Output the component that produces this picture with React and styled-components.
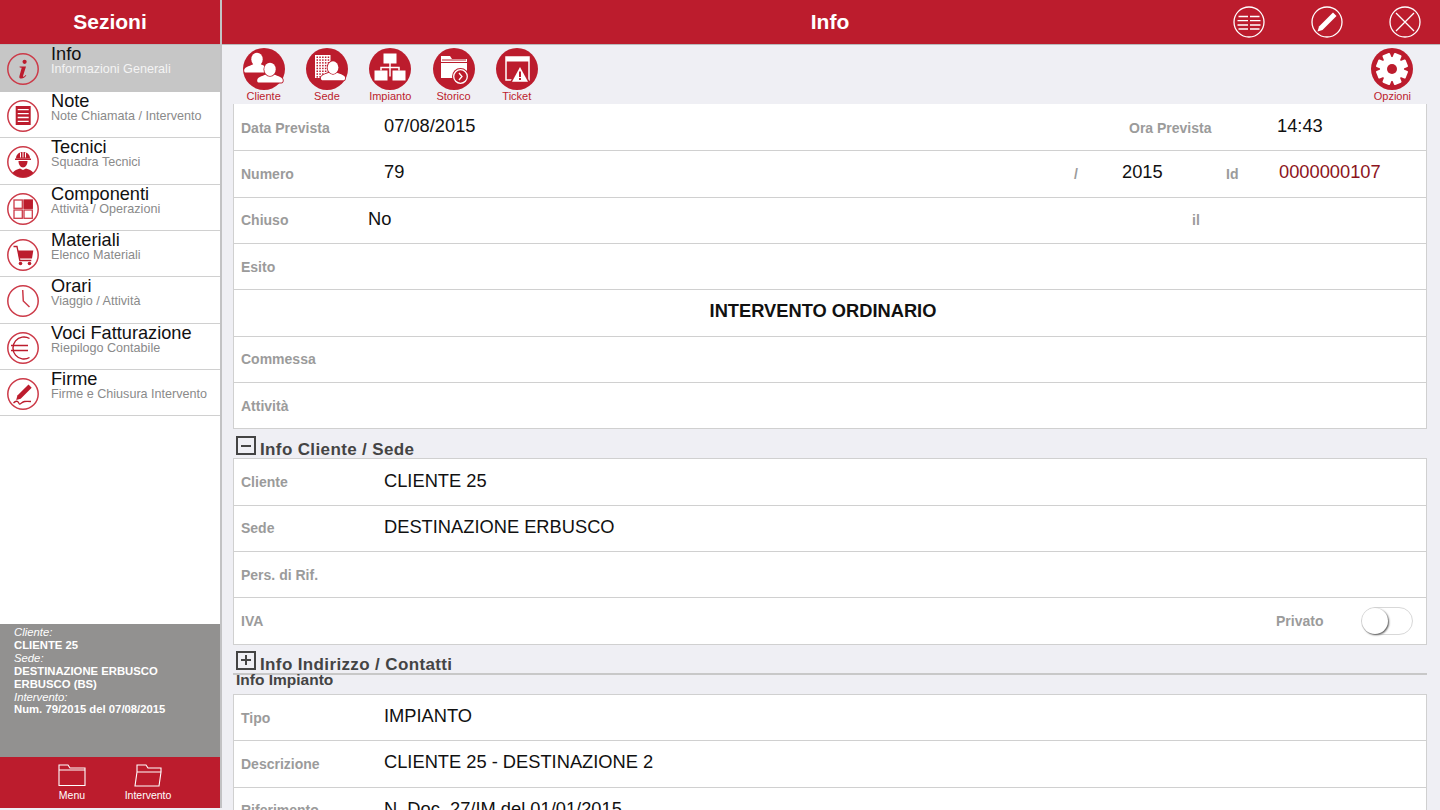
import React from 'react';
import styled, { createGlobalStyle } from 'styled-components';

const RED = '#bc1c2d';

const Global = createGlobalStyle`
  html, body { margin: 0; padding: 0; height: 810px; overflow: hidden; background: #efeff4; }
  body { font-family: "Liberation Sans", Arial, sans-serif; }
`;

const Page = styled.div`
  display: grid;
  grid-template-columns: 222px 1fr;
  width: 1440px;
  height: 810px;
  overflow: hidden;
`;

const Side = styled.aside`
  display: flex;
  flex-direction: column;
  height: 808px;
  box-sizing: border-box;
  background: #fff;
  border-right: 2px solid #c2c2c4;
`;

const TopBar = styled.header`
  flex: none;
  display: flex;
  align-items: center;
  justify-content: center;
  position: relative;
  height: 44px;
  padding-right: ${p => p.$inset || 0}px;
  background: ${RED};
  border-bottom: 1px solid #b9b9bb;
  color: #fff;
  font-size: 21px;
  font-weight: bold;
`;

const Menu = styled.nav`
  flex: 1;
  display: flex;
  flex-direction: column;
`;

const MenuItem = styled.div`
  display: flex;
  height: ${p => (p.$active ? '47px' : '46.33px')};
  flex: none;
  box-sizing: border-box;
  padding: 1px 0 0 7px;
  gap: 12px;
  align-items: flex-start;
  background: ${p => (p.$active ? '#c6c6c6' : '#fff')};
  border-bottom: 1px solid ${p => (p.$active ? '#c6c6c6' : '#d0d0d0')};
`;

const MenuIcon = styled.svg`
  flex: none;
  width: 32px;
  height: 32px;
  margin-top: 7px;
`;

const MenuText = styled.div`
  display: flex;
  flex-direction: column;
`;

const MenuTitle = styled.span`
  font-size: 18.2px;
  line-height: 16px;
  color: #111;
`;

const MenuSub = styled.span`
  font-size: 12.6px;
  line-height: 14px;
  color: ${p => (p.$active ? '#f4f4f4' : '#8a8a8a')};
`;

const Summary = styled.div`
  flex: none;
  height: 133px;
  box-sizing: border-box;
  padding: 2px 0 0 14px;
  background: #929190;
  color: #fff;
  font-size: 11.3px;
  line-height: 12.9px;
`;

const SummaryLabel = styled.div`
  font-style: italic;
`;

const SummaryValue = styled.div`
  font-weight: bold;
`;

const Foot = styled.div`
  flex: none;
  height: 51px;
  display: flex;
  background: ${RED};
  padding-left: 42px;
  gap: 16px;
`;

const FootBtn = styled.div`
  width: 60px;
  display: flex;
  flex-direction: column;
  align-items: center;
  padding-top: 6px;
  color: #fff;
  font-size: 10.5px;
  line-height: 12px;
  svg { width: 28px; height: 24px; margin-bottom: 2px; display: block; }
`;

const Main = styled.main`
  display: flex;
  flex-direction: column;
  min-width: 0;
  height: 810px;
  overflow: hidden;
  background: #efeff4;
`;

const HeadActions = styled.div`
  position: absolute;
  right: 19px;
  top: 6px;
  display: flex;
  gap: 46px;
  svg { width: 32px; height: 32px; display: block; }
`;

const Tools = styled.div`
  flex: none;
  display: flex;
  height: 59px;
  padding: 3px 16px 0 10px;
  box-sizing: border-box;
`;

const Tool = styled.div`
  width: 63.3px;
  display: flex;
  flex-direction: column;
  align-items: center;
  color: ${RED};
  font-size: 11px;
  line-height: 12px;
  ${p => p.$right && 'margin-left: auto;'}
  svg { width: 42px; height: 42px; display: block; }
`;

const Body = styled.div`
  padding: 0 13px 0 11px;
`;

const Card = styled.section`
  background: #fff;
  border: 1px solid #d0d0d0;
  ${p => p.$flush && 'border-top: 0; padding-top: 1px;'}
`;

const Row = styled.div`
  display: flex;
  align-items: center;
  height: 46.33px;
  box-sizing: border-box;
  padding-left: 7px;
  border-bottom: 1px solid #d0d0d0;
  &:last-child { border-bottom: 0; height: 45.5px; }
`;

const Label = styled.span`
  flex: none;
  width: ${p => p.$w || 143}px;
  ${p => p.$auto && 'margin-left: auto;'}
  font-size: 14px;
  font-weight: bold;
  color: #9b9b9b;
`;

const Value = styled.span`
  ${p => (p.$w ? `flex: none; width: ${p.$w}px;` : 'flex: 1;')}
  padding-bottom: 3px;
  font-size: 18.3px;
  color: ${p => p.$tone || '#111'};
  white-space: nowrap;
`;

const Banner = styled.div`
  flex: 1;
  text-align: center;
  padding: 0 21px 3px 0;
  font-size: 18.3px;
  font-weight: bold;
  color: #111;
`;

const SectionHead = styled.div`
  display: flex;
  align-items: flex-end;
  height: ${p => p.$h}px;
  padding-left: 3px;
  color: #444;
  font-size: 17px;
  font-weight: bold;
  letter-spacing: 0.37px;
  line-height: 17px;
  gap: 4px;
`;

const Toggler = styled.span`
  flex: none;
  width: 20px;
  height: 19px;
  box-sizing: border-box;
  margin-bottom: 3px;
  border: 2px solid #444;
  display: flex;
  align-items: center;
  justify-content: center;
  position: relative;
  &::before { content: ''; width: 10px; height: 2px; background: #444; }
  ${p => p.$plus && `&::after { content: ''; position: absolute; width: 2px; height: 10px; background: #444; }`}
`;

const Rule = styled.div`
  height: 2px;
  background: #c8c8c8;
`;

const SubHead = styled.div`
  height: 22px;
  margin-top: -3px;
  padding-left: 3px;
  color: #444;
  font-size: 15.5px;
  font-weight: bold;
  line-height: 16px;
`;

const Switch = styled.span`
  flex: none;
  position: relative;
  width: 52px;
  height: 28px;
  box-sizing: border-box;
  margin-right: 13px;
  border: 1px solid #d8d8d8;
  border-radius: 14px;
  background: #fff;
  &::after {
    content: '';
    position: absolute;
    left: 0;
    top: 0;
    width: 26px;
    height: 26px;
    border-radius: 50%;
    background: #fff;
    box-shadow: 1px 1px 2px #555;
  }
`;

const Ring = ({ children }) => (
  <MenuIcon viewBox="0 0 32 32">
    <circle cx="16" cy="16" r="15.2" fill="none" stroke="#cc3a48" strokeWidth="1.5" />
    {children}
  </MenuIcon>
);

const menuIcons = {
  info: (
    <>
      <circle cx="17.6" cy="8.8" r="2.100" fill={RED} />
      <path d="M12.5 13.500h6.500l-3 9.500c-.2.8.5 1 1.200.4l1.600-1.400.5.600c-1.500 1.800-3 3-4.900 3-1.700 0-2.400-.9-2-2.300l2.300-8.500-1.900-.3z" fill={RED} />
    </>
  ),
  note: (
    <>
      <rect x="8.700" y="6" width="15" height="19" fill={RED} />
      <path d="M10.700 9.700h11M10.700 13.700h11M10.700 17.500h11M10.700 21.300h11" stroke="#fff" strokeWidth="1.300" />
    </>
  ),
  tecnici: (
    <>
      <path d="M9 12.500c0-4 3-6.500 7-6.500s7 2.500 7 6.500z" fill={RED} />
      <path d="M13.500 6.500v5M16 6v5.500M18.500 6.500v5" stroke="#fff" strokeWidth="1" />
      <rect x="8" y="12.500" width="16" height="1.500" fill={RED} />
      <path d="M11.500 15h9c0 3.500-1.800 6.500-4.500 6.500s-4.500-3-4.500-6.500z" fill={RED} />
      <path d="M5.500 27c2-3 4.500-3.500 7.500-4.500l3 1.500 3-1.500c3 1 5.500 1.500 7.500 4.500-3 3-6.500 4.200-10.500 4.200S8.500 30 5.500 27z" fill={RED} />
    </>
  ),
  componenti: (
    <>
      <rect x="7" y="7" width="8.300" height="8.300" fill="none" stroke="#cc3a48" strokeWidth="1.300" />
      <rect x="17" y="7" width="8.300" height="8.300" fill={RED} stroke={RED} strokeWidth="1.300" />
      <rect x="7" y="17" width="8.300" height="8.300" fill="none" stroke="#cc3a48" strokeWidth="1.300" />
      <rect x="17" y="17" width="8.300" height="8.300" fill="none" stroke="#cc3a48" strokeWidth="1.300" />
    </>
  ),
  materiali: (
    <>
      <path d="M6.500 7.500h3.500l2.800 14h11.500" fill="none" stroke={RED} strokeWidth="1.300" />
      <path d="M10.800 11.500h15.500l-1.300 8H12.300z" fill={RED} />
      <circle cx="13.500" cy="24.500" r="1.800" fill={RED} />
      <circle cx="22.500" cy="24.500" r="1.800" fill={RED} />
    </>
  ),
  orari: <path d="M15.700 5l.6 11 6.200 6" fill="none" stroke="#cc3a48" strokeWidth="1.500" />,
  voci: (
    <>
      <path d="M22.500 6.500A11 11 0 1 0 22.500 25.500" fill="none" stroke={RED} strokeWidth="1.400" />
      <path d="M4 13.500h17M4 18.500h17" stroke={RED} strokeWidth="1.400" />
    </>
  ),
  firme: (
    <>
      <path d="M21.500 6.500l3.200 3.200-11 11-4.500 1.300 1.200-4.600z" fill={RED} />
      <path d="M6.500 25c2-2 4-2.500 5-.5s1 2 3 .5 3-2 9.500-1.500" fill="none" stroke={RED} strokeWidth="1.300" />
    </>
  ),
};

const menu = [
  ['Info', 'Informazioni Generali', 'info'],
  ['Note', 'Note Chiamata / Intervento', 'note'],
  ['Tecnici', 'Squadra Tecnici', 'tecnici'],
  ['Componenti', 'Attività / Operazioni', 'componenti'],
  ['Materiali', 'Elenco Materiali', 'materiali'],
  ['Orari', 'Viaggio / Attività', 'orari'],
  ['Voci Fatturazione', 'Riepilogo Contabile', 'voci'],
  ['Firme', 'Firme e Chiusura Intervento', 'firme'],
];

const Person = ({ x, y, s = 1, cut }) => (
  <g
    transform={`translate(${x} ${y}) scale(${s})`}
    fill="#fff"
    stroke={cut ? RED : 'none'}
    strokeWidth={cut ? 1.800 : 0}
    paintOrder="stroke"
  >
    <path d="M-3 -2c-.5 2.500-8 3-10 6-1 1.500-.5 4 1 4h24c1.500 0 2-2.500 1-4-2-3-9.500-3.500-10-6z" />
    <ellipse cx="0" cy="-6" rx="6" ry="7" />
  </g>
);

const ToolIcon = ({ children }) => (
  <svg viewBox="0 0 42 42">
    <circle cx="21" cy="21" r="21" fill={RED} />
    {children}
  </svg>
);

const buildingCells = [];
for (let r = 0; r < 8; r++) {
  for (let c = 0; c < 5; c++) {
    buildingCells.push(<rect key={`${r}-${c}`} x={10.500 + c * 2.800} y={8.500 + r * 2.800} width="1.500" height="1.500" fill={RED} />);
  }
}

const toolIcons = [
  ['Cliente', (
    <>
      <Person x={14} y={17} s={0.95} />
      <Person x={27} y={27} s={0.95} cut />
    </>
  )],
  ['Sede', (
    <>
      <rect x="9" y="7" width="15.500" height="23" fill="#fff" />
      {buildingCells}
      <Person x={27} y={25} s={0.9} cut />
    </>
  )],
  ['Impianto', (
    <>
      <rect x="14.500" y="5.500" width="13" height="10" fill="#fff" />
      <rect x="5.500" y="22.500" width="13" height="10" fill="#fff" />
      <rect x="23.500" y="22.500" width="13" height="10" fill="#fff" />
      <path d="M21 15v5M12 22.500V19.500h18v3M21 19.500v9" fill="none" stroke="#fff" strokeWidth="1.500" />
    </>
  )],
  ['Storico', (
    <>
      <path d="M8 8h9l2 3h15v3H8z" fill="#fff" />
      <path d="M9 12h24" stroke={RED} strokeWidth="1" />
      <path d="M8 15h26v15H8z" fill="#fff" />
      <circle cx="27.500" cy="28.500" r="8.500" fill={RED} />
      <circle cx="27.500" cy="28.500" r="6.800" fill="none" stroke="#fff" strokeWidth="1.300" />
      <path d="M26 25l3 3.500-3 3.500" fill="none" stroke="#fff" strokeWidth="1.300" />
    </>
  )],
  ['Ticket', (
    <>
      <path d="M10 9h23v23H10z" fill="none" stroke="#fff" strokeWidth="1.500" />
      <rect x="10" y="9" width="23" height="4.500" fill="#fff" />
      <path d="M24 16.500L34.500 35H13.500z" fill={RED} />
      <path d="M24 19L32 33.700H16z" fill="#fff" />
      <path d="M24 23.500v5.500M24 30v2" stroke={RED} strokeWidth="2" />
    </>
  )],
];

const gear = (
  <g>
    <circle cx="21" cy="21" r="12" fill="#fff" />
    {[0, 45, 90, 135].map(a => (
      <rect key={a} x="17" y="5" width="8" height="32" rx="1" fill="#fff" transform={`rotate(${a + 22.500} 21 21)`} />
    ))}
    <circle cx="21" cy="21" r="5" fill={RED} />
  </g>
);

export default function App() {
  return (
    <Page>
      <Global />
      <Side>
        <TopBar>Sezioni</TopBar>
        <Menu>
          {menu.map(([title, sub, icon], i) => (
            <MenuItem key={title} $active={i === 0}>
              <Ring>{menuIcons[icon]}</Ring>
              <MenuText>
                <MenuTitle>{title}</MenuTitle>
                <MenuSub $active={i === 0}>{sub}</MenuSub>
              </MenuText>
            </MenuItem>
          ))}
        </Menu>
        <Summary>
          <SummaryLabel>Cliente:</SummaryLabel>
          <SummaryValue>CLIENTE 25</SummaryValue>
          <SummaryLabel>Sede:</SummaryLabel>
          <SummaryValue>DESTINAZIONE ERBUSCO</SummaryValue>
          <SummaryValue>ERBUSCO (BS)</SummaryValue>
          <SummaryLabel>Intervento:</SummaryLabel>
          <SummaryValue>Num. 79/2015 del 07/08/2015</SummaryValue>
        </Summary>
        <Foot>
          <FootBtn>
            <svg viewBox="0 0 28 24" fill="none" stroke="#fff" strokeWidth="1.100">
              <path d="M1 22.500V2h9l2 3h15v17.500zM1 7h26" />
            </svg>
            Menu
          </FootBtn>
          <FootBtn>
            <svg viewBox="0 0 28 24" fill="none" stroke="#fff" strokeWidth="1.100">
              <path d="M3 9V2h9l2 3h13v4M3 9h24l-2 14H1z" />
            </svg>
            Intervento
          </FootBtn>
        </Foot>
      </Side>

      <Main>
        <TopBar $inset={2}>
          Info
          <HeadActions>
            <svg viewBox="0 0 32 32" fill="none" stroke="#fff">
              <circle cx="16" cy="16" r="15" strokeWidth="1.300" />
              <path d="M5.500 10.500h9.500M17 10.500h9.500M4.500 14.700h10.500M17 14.700h10.500M4.500 19h10.500M17 19h10.500M5.500 23h9.500M17 23h9.500" strokeWidth="1.300" />
            </svg>
            <svg viewBox="0 0 32 32" fill="none" stroke="#fff">
              <circle cx="16" cy="16" r="15" strokeWidth="1.300" />
              <path d="M22 6.500l3.500 3.500-14 14-5 1.500 1.500-5z" fill="#fff" stroke="none" />
            </svg>
            <svg viewBox="0 0 32 32" fill="none" stroke="#fff">
              <circle cx="16" cy="16" r="15" strokeWidth="1.300" />
              <path d="M7 7l18 18M25 7L7 25" strokeWidth="1.300" />
            </svg>
          </HeadActions>
        </TopBar>
        <Tools>
          {toolIcons.map(([name, art]) => (
            <Tool key={name}>
              <ToolIcon>{art}</ToolIcon>
              {name}
            </Tool>
          ))}
          <Tool $right>
            <ToolIcon>{gear}</ToolIcon>
            Opzioni
          </Tool>
        </Tools>
        <Body>
          <Card $flush>
            <Row>
              <Label>Data Prevista</Label>
              <Value>07/08/2015</Value>
              <Label $w={148}>Ora Prevista</Label>
              <Value $w={149}>14:43</Value>
            </Row>
            <Row>
              <Label>Numero</Label>
              <Value>79</Value>
              <Label $w={48}>/</Label>
              <Value $w={104}>2015</Value>
              <Label $w={53}>Id</Label>
              <Value $w={147} $tone="#8c1420">0000000107</Value>
            </Row>
            <Row>
              <Label $w={127}>Chiuso</Label>
              <Value>No</Value>
              <Label $w={234}>il</Label>
            </Row>
            <Row><Label>Esito</Label></Row>
            <Row><Banner>INTERVENTO ORDINARIO</Banner></Row>
            <Row><Label>Commessa</Label></Row>
            <Row><Label>Attività</Label></Row>
          </Card>
          <SectionHead $h={29}><Toggler />Info Cliente / Sede</SectionHead>
          <Card>
            <Row><Label>Cliente</Label><Value>CLIENTE 25</Value></Row>
            <Row><Label>Sede</Label><Value>DESTINAZIONE ERBUSCO</Value></Row>
            <Row><Label>Pers. di Rif.</Label></Row>
            <Row>
              <Label>IVA</Label>
              <Label $auto $w={85}>Privato</Label>
              <Switch />
            </Row>
          </Card>
          <SectionHead $h={28}><Toggler $plus />Info Indirizzo / Contatti</SectionHead>
          <Rule />
          <SubHead>Info Impianto</SubHead>
          <Card>
            <Row><Label>Tipo</Label><Value>IMPIANTO</Value></Row>
            <Row><Label>Descrizione</Label><Value>CLIENTE 25 - DESTINAZIONE 2</Value></Row>
            <Row><Label>Riferimento</Label><Value>N. Doc. 27/IM del 01/01/2015</Value></Row>
          </Card>
        </Body>
      </Main>
    </Page>
  );
}
